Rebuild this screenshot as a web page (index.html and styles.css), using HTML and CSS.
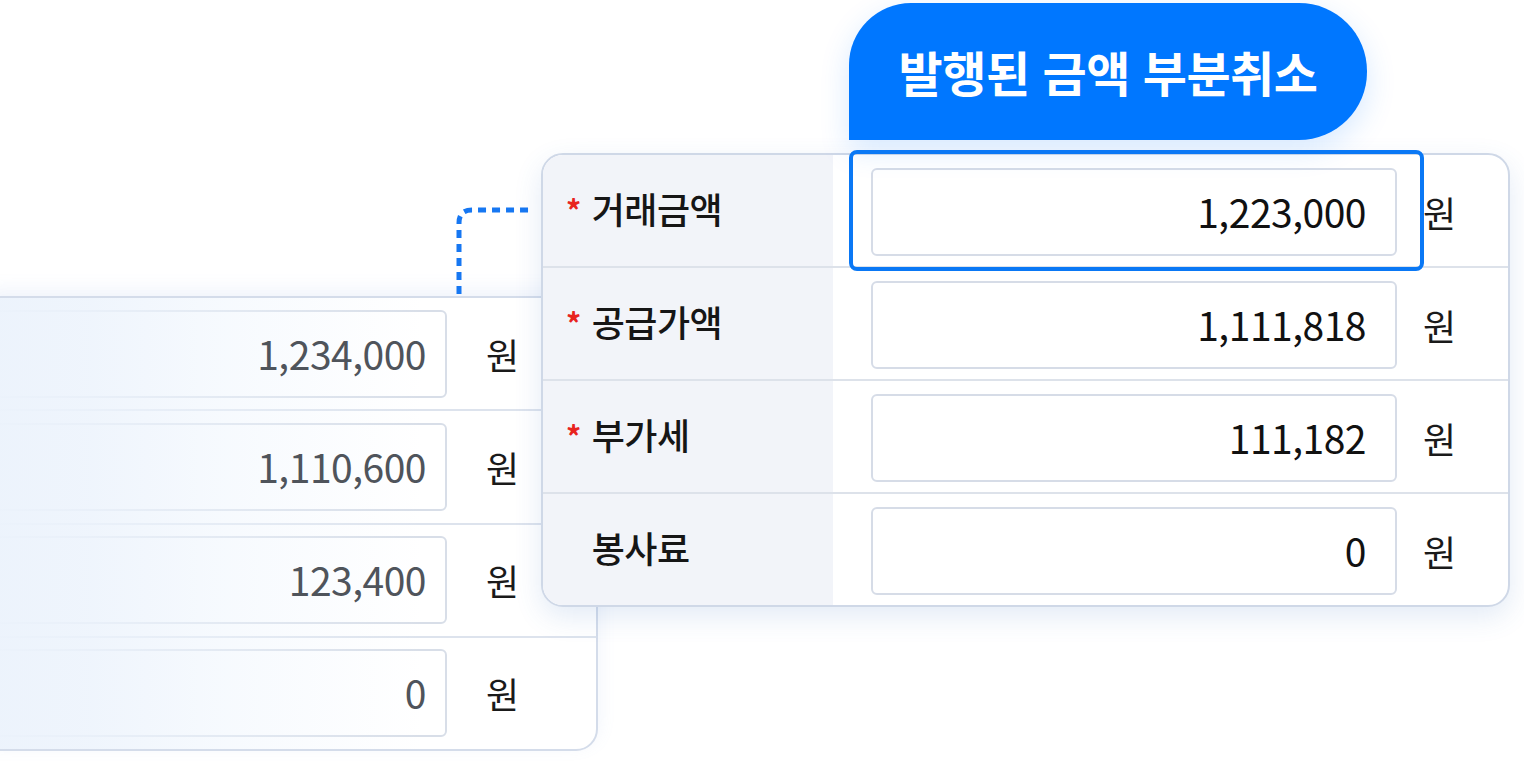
FILE: index.html
```html
<!DOCTYPE html>
<html lang="ko">
<head>
    <meta charset="UTF-8">
    <meta name="viewport" content="width=device-width, initial-scale=1.0">
    <title>발행된 금액 부분취소</title>
    <link rel="stylesheet" href="styles.css">
</head>
<body>
    <div class="stage">
        <!-- 원래 발행 금액 (뒤쪽 카드) -->
        <div class="card-back">
            <div class="back-row">
                <div class="back-input"><span>1,234,000</span></div>
                <span class="unit">원</span>
            </div>
            <div class="back-row">
                <div class="back-input"><span>1,110,600</span></div>
                <span class="unit">원</span>
            </div>
            <div class="back-row">
                <div class="back-input"><span>123,400</span></div>
                <span class="unit">원</span>
            </div>
            <div class="back-row">
                <div class="back-input"><span>0</span></div>
                <span class="unit">원</span>
            </div>
        </div>

        <svg class="connector" width="90" height="100" viewBox="0 0 90 100">
            <path d="M9 94 V23 Q9 10 22 10 H83" fill="none" stroke="#1677f2" stroke-width="5" stroke-dasharray="8 6"/>
        </svg>

        <!-- 부분취소 카드 -->
        <div class="card-front">
            <div class="front-row">
                <div class="label"><span class="req">*</span>거래금액</div>
                <div class="field">
                    <div class="input">1,223,000</div>
                    <span class="unit">원</span>
                </div>
            </div>
            <div class="front-row">
                <div class="label"><span class="req">*</span>공급가액</div>
                <div class="field">
                    <div class="input">1,111,818</div>
                    <span class="unit">원</span>
                </div>
            </div>
            <div class="front-row">
                <div class="label"><span class="req">*</span>부가세</div>
                <div class="field">
                    <div class="input">111,182</div>
                    <span class="unit">원</span>
                </div>
            </div>
            <div class="front-row">
                <div class="label"><span class="req empty">*</span>봉사료</div>
                <div class="field">
                    <div class="input">0</div>
                    <span class="unit">원</span>
                </div>
            </div>
        </div>

        <div class="tab">발행된 금액 부분취소</div>
        <div class="focus-ring"></div>
    </div>
</body>
</html>
```

FILE: styles.css
```css
* {
    box-sizing: border-box;
    margin: 0;
    padding: 0;
}

body {
    font-family: "Noto Sans CJK KR", "Noto Sans", sans-serif;
    background-color: #ffffff;
    color: #141414;
    overflow: hidden;
}

.stage {
    position: relative;
    width: 1524px;
    height: 780px;
    overflow: hidden;
}

/* 뒤쪽 카드 */
.card-back {
    position: absolute;
    left: -24px;
    top: 296px;
    width: 622px;
    height: 455px;
    background: #ffffff;
    border: 2px solid #d4dcea;
    border-radius: 22px;
    box-shadow: 0 -6px 18px rgba(120, 160, 220, 0.12);
    display: flex;
    flex-direction: column;
    overflow: hidden;
}

.card-back::after {
    content: "";
    position: absolute;
    inset: 0;
    background: linear-gradient(to right,
        rgba(236, 243, 252, 1) 0%,
        rgba(236, 243, 252, 0.85) 18%,
        rgba(238, 245, 253, 0.5) 40%,
        rgba(255, 255, 255, 0) 72%);
    pointer-events: none;
}

.back-row {
    flex: 1;
    display: flex;
    align-items: center;
    border-top: 2px solid #dde3ed;
}

.back-row:first-child {
    border-top: none;
}

.back-input {
    width: 469px;
    height: 88px;
    border: 2px solid #d8dee8;
    border-radius: 6px;
    background: #ffffff;
    font-size: 39px;
    color: #4f545b;
    text-align: right;
    padding-right: 19px;
    line-height: 82px;
    letter-spacing: -0.5px;
}

.back-input span {
    position: relative;
    z-index: 1;
}

.unit {
    font-size: 36px;
    color: #1a1a1a;
}

.back-row .unit {
    margin-left: 39px;
    position: relative;
    z-index: 1;
}

/* 점선 연결 */
.connector {
    position: absolute;
    left: 450px;
    top: 200px;
}

/* 앞쪽 카드 */
.card-front {
    position: absolute;
    left: 541px;
    top: 153px;
    width: 969px;
    height: 454px;
    background: #ffffff;
    border: 2px solid #cfd8e7;
    border-radius: 22px;
    box-shadow: 0 10px 28px rgba(60, 110, 190, 0.14);
    display: flex;
    flex-direction: column;
    overflow: hidden;
}

.front-row {
    flex: 1;
    display: flex;
    border-top: 2px solid #dde2ea;
}

.front-row:first-child {
    border-top: none;
}

.label {
    width: 290px;
    background: #f2f4f9;
    display: flex;
    align-items: center;
    padding-left: 23px;
    padding-bottom: 6px;
    font-size: 36px;
    font-weight: 500;
    color: #161616;
    letter-spacing: -0.5px;
}

.req {
    color: #e8231e;
    font-size: 30px;
    font-weight: 700;
    margin-right: 11px;
    position: relative;
    top: 1px;
}

.req.empty {
    visibility: hidden;
}

.field {
    flex: 1;
    display: flex;
    align-items: center;
    padding-left: 38px;
    padding-top: 3px;
}

.input {
    width: 526px;
    height: 88px;
    border: 2px solid #d6dce7;
    border-radius: 6px;
    background: #ffffff;
    font-size: 39px;
    color: #111111;
    text-align: right;
    padding-right: 29px;
    line-height: 82px;
    letter-spacing: -0.5px;
}

.field .unit {
    margin-left: 26px;
}

/* 제목 탭 */
.tab {
    position: absolute;
    left: 849px;
    top: 3px;
    width: 518px;
    height: 137px;
    background: #0077ff;
    border-radius: 62px 68px 68px 0;
    color: #ffffff;
    font-size: 48px;
    font-weight: 700;
    letter-spacing: -0.5px;
    display: flex;
    align-items: center;
    justify-content: center;
    padding-bottom: 2px;
    box-shadow: 0 10px 30px rgba(0, 119, 255, 0.16);
}

/* 선택된 입력 강조 */
.focus-ring {
    position: absolute;
    left: 849px;
    top: 150px;
    width: 575px;
    height: 121px;
    border: 4px solid #0a78f5;
    border-radius: 8px;
    pointer-events: none;
}
```
